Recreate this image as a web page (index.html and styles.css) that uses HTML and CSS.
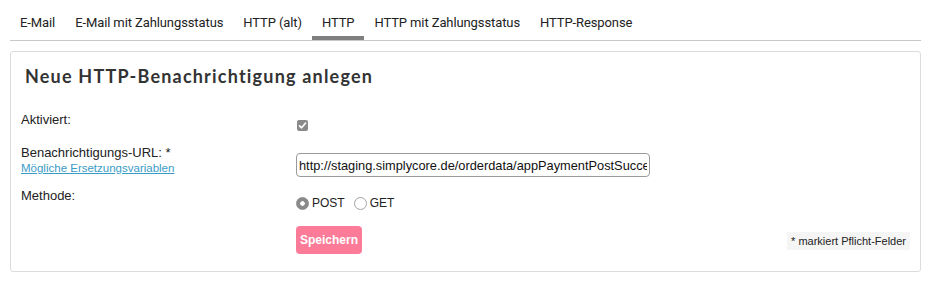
FILE: index.html
```html
<!DOCTYPE html>
<html lang="de">
<head>
    <meta charset="UTF-8">
    <meta name="viewport" content="width=device-width, initial-scale=1.0">
    <title>HTTP-Benachrichtigung</title>
    <link rel="stylesheet" href="styles.css">
</head>
<body>
    <div class="page">
        <!-- Tabs -->
        <ul class="tabs">
            <li class="tab">E-Mail</li>
            <li class="tab">E-Mail mit Zahlungsstatus</li>
            <li class="tab">HTTP (alt)</li>
            <li class="tab active">HTTP</li>
            <li class="tab">HTTP mit Zahlungsstatus</li>
            <li class="tab">HTTP-Response</li>
        </ul>

        <!-- Panel -->
        <div class="panel">
            <h2 class="panel-title">Neue HTTP-Benachrichtigung anlegen</h2>

            <form class="form">
                <div class="row row-active">
                    <div class="label">Aktiviert:</div>
                    <div class="control">
                        <span class="checkbox">
                            <svg width="9" height="9" viewBox="0 0 9 9"><path d="M1.5 4.8 L3.6 6.8 L7.6 2" fill="none" stroke="#fff" stroke-width="1.6" stroke-linecap="round" stroke-linejoin="round"/></svg>
                        </span>
                    </div>
                </div>

                <div class="row row-url">
                    <div class="label">
                        Benachrichtigungs-URL: *
                        <a href="#" class="hint">Mögliche Ersetzungsvariablen</a>
                    </div>
                    <div class="control">
                        <input class="text-input" type="text" value="http://staging.simplycore.de/orderdata/appPaymentPostSuccess">
                    </div>
                </div>

                <div class="row row-method">
                    <div class="label">Methode:</div>
                    <div class="control radios">
                        <label class="radio-label"><input type="radio" name="method" class="radio" checked>POST</label>
                        <label class="radio-label"><input type="radio" name="method" class="radio">GET</label>
                    </div>
                </div>

                <div class="row row-submit">
                    <div></div>
                    <div class="submit-line">
                        <button type="button" class="button">Speichern</button>
                        <span class="required-note">* markiert Pflicht-Felder</span>
                    </div>
                </div>
            </form>
        </div>
    </div>
</body>
</html>
```

FILE: styles.css
```css
/* Page base */
body {
    margin: 0;
    font-family: "Liberation Sans", Arial, sans-serif;
    font-size: 13px;
    color: #222;
    background-color: #fff;
}

.page {
    padding: 0 10px;
}

/* Tabs */
.tabs {
    display: flex;
    margin: 0;
    padding: 0;
    list-style: none;
    border-bottom: 1px solid #c8c8c8;
}

.tab {
    padding: 15px 10px 5px;
    line-height: 16px;
    font-family: Roboto, "Liberation Sans", sans-serif;
    font-size: 13px;
    letter-spacing: -0.1px;
    color: #222;
    border-bottom: 4px solid transparent;
}

.tab.active {
    border-bottom-color: #7f7f7f;
}

/* Panel */
.panel {
    margin-top: 10px;
    padding: 0 10px 17px 10px;
    border: 1px solid #dcdcdc;
    border-radius: 3px;
}

.panel-title {
    margin: 0;
    padding: 13px 4px 0;
    line-height: 22px;
    font-family: Lato, "Open Sans", sans-serif;
    font-size: 18px;
    font-weight: bold;
    letter-spacing: 1.2px;
    color: #333;
}

/* Form rows */
.form {
    margin-top: 25px;
}

.row {
    display: grid;
    grid-template-columns: 275px 1fr;
    align-items: start;
}

.row-active { margin-bottom: 14px; }
.row-url { margin-bottom: 11px; }
.row-method { margin-bottom: 16px; }

.label {
    line-height: 16px;
}

.hint {
    display: block;
    font-size: 11.5px;
    line-height: 14px;
    color: #3a9cc6;
}

.control {
    padding-top: 8px;
}

/* Checkbox */
.checkbox {
    display: flex;
    justify-content: center;
    align-items: center;
    width: 11px;
    height: 11px;
    margin-left: 1px;
    border-radius: 2px;
    background-color: #8a8a8a;
}

/* Text input */
.text-input {
    box-sizing: border-box;
    width: 354px;
    height: 24px;
    padding: 0 2px;
    font-family: "Liberation Sans", Arial, sans-serif;
    font-size: 12.8px;
    color: #111;
    border: 1px solid #9a9a9a;
    border-radius: 4px;
}

/* Radios */
.radios {
    display: flex;
    gap: 9px;
}

.radio-label {
    display: flex;
    align-items: center;
    line-height: 14px;
    font-size: 12px;
}

.radio {
    appearance: none;
    box-sizing: border-box;
    width: 13px;
    height: 13px;
    margin: 0 3px 0 0;
    border: 1px solid #a3a3a3;
    border-radius: 50%;
    background-color: #fff;
}

.radio:checked {
    border-color: #8a8a8a;
    background: radial-gradient(circle, #fff 0 2px, #8a8a8a 2.5px);
}

/* Submit line */
.submit-line {
    display: flex;
    justify-content: space-between;
    align-items: center;
}

.button {
    height: 28px;
    padding: 0 4px;
    font-family: "Liberation Sans", Arial, sans-serif;
    font-size: 12px;
    font-weight: bold;
    color: #fff;
    background-color: #fb7b99;
    border: none;
    border-radius: 4px;
}

.required-note {
    margin-top: 2px;
    padding: 3px 4px;
    font-size: 11px;
    background-color: #f5f5f5;
}
```
